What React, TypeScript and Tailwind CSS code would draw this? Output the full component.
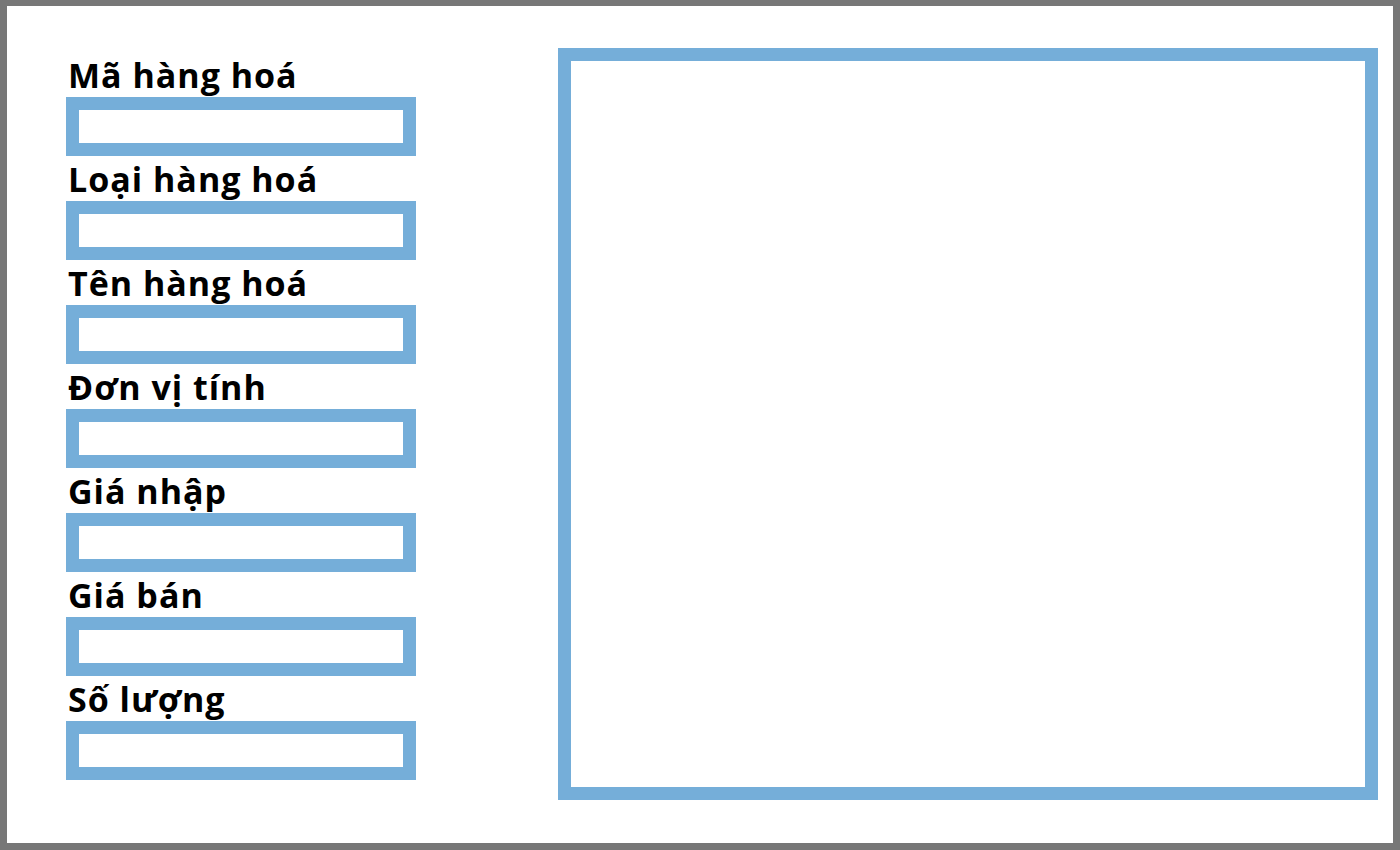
import React from "react";

const fields = [
  "Mã hàng hoá",
  "Loại hàng hoá",
  "Tên hàng hoá",
  "Đơn vị tính",
  "Giá nhập",
  "Giá bán",
  "Số lượng",
];

export default function App() {
  return (
    <div
      className="w-[1400px] h-[850px] bg-white border-[7px] border-t-[6px] border-[#777777] flex"
      style={{ fontFamily: '"Open Sans", "Noto Sans", sans-serif' }}
    >
      <div className="pl-[59px] pt-[46px] flex flex-col w-[416px]">
        {fields.map((f) => (
          <div key={f} className="flex flex-col h-[104px]">
            <label className="h-[45px] pl-[2px] pt-[3px] text-[34px] leading-[40px] font-bold tracking-[1px] text-black whitespace-nowrap">
              {f}
            </label>
            <input
              type="text"
              className="w-[350px] h-[59px] border-[13px] border-[#75aed9] bg-white outline-none"
            />
          </div>
        ))}
      </div>
      <div className="ml-[135px] mt-[42px] w-[820px] h-[752px] border-[13px] border-[#75aed9] bg-white" />
    </div>
  );
}
